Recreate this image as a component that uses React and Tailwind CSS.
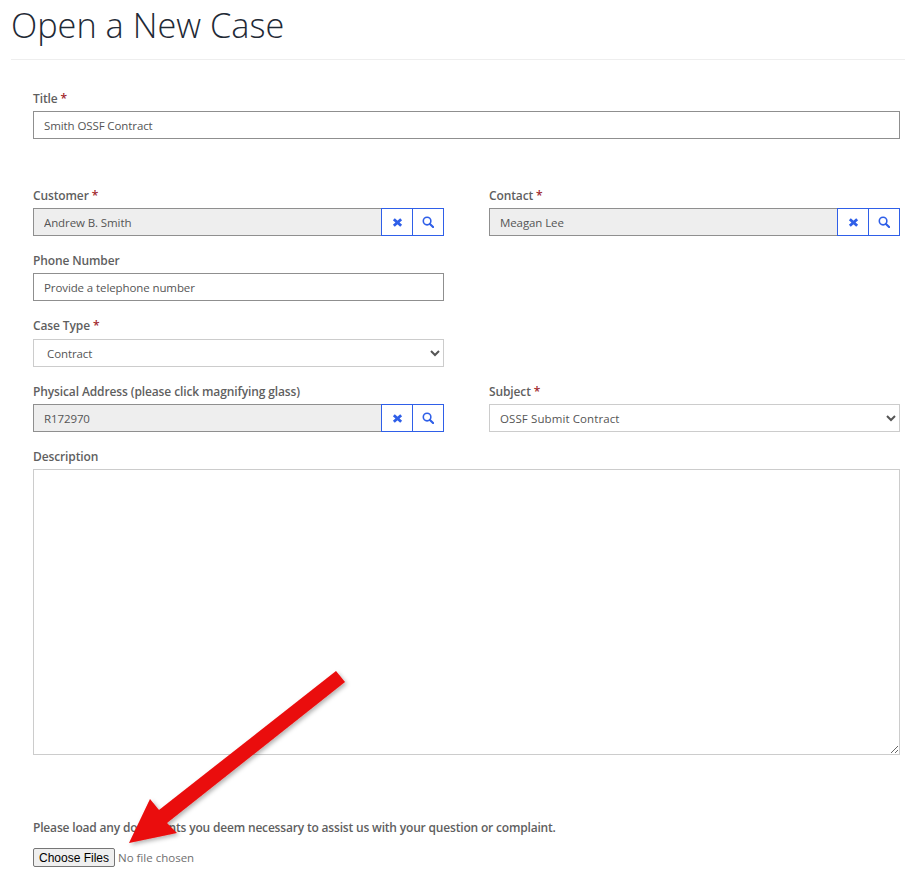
import React from 'react';

/* ── Icons (heavy x + magnifier, as in the lookup buttons) ── */
const ClearIcon = () => (
  <svg className="h-[11px] w-[11px]" viewBox="0 0 12 12" fill="none" stroke="currentColor" strokeWidth="3.1">
    <path d="M2 2.4 10 9.6M10 2.4 2 9.6" />
  </svg>
);

const SearchIcon = () => (
  <svg className="h-[12px] w-[12px]" viewBox="0 0 13 13" fill="none" stroke="currentColor">
    <circle cx="5.5" cy="5.5" r="4.1" strokeWidth="1.7" />
    <path d="M8.6 8.6 12 12" strokeWidth="2.3" strokeLinecap="round" />
  </svg>
);

/* ── Field label ─────────────────────────────────────── */
const Label = ({ text, required }) => (
  <label className="block h-[19px] text-[12px] leading-[14px] tracking-[-0.12px] font-semibold text-[#5f5f5f]">
    {text}
    {required && <span className="text-[#a1262c]"> *</span>}
  </label>
);

/* ── Read-only lookup with clear + search buttons ────── */
const Lookup = ({ label, required, value }) => (
  <div>
    <Label text={label} required={required} />
    <div className="flex h-[28px]">
      <input
        readOnly
        value={value}
        className="min-w-0 flex-1 border border-r-0 border-[#8f8f8f] bg-[#eeeeee] px-[10px] pt-[2px] text-[11.5px] tracking-[-0.1px] text-[#555555] outline-none"
      />
      <button className="flex w-[32px] items-center justify-center border border-[#2f5fe8] bg-white text-[#2f5fe8]">
        <ClearIcon />
      </button>
      <button className="-ml-px flex w-[32px] items-center justify-center border border-[#2f5fe8] bg-white text-[#2f5fe8]">
        <SearchIcon />
      </button>
    </div>
  </div>
);

const TextField = ({ label, required, value }) => (
  <div>
    <Label text={label} required={required} />
    <input
      readOnly
      value={value}
      className="block h-[28px] w-full border border-[#8f8f8f] bg-white px-[10px] text-[11.5px] tracking-[-0.1px] text-[#555555] outline-none"
    />
  </div>
);

const SelectField = ({ label, required, value, className }) => (
  <div>
    <Label text={label} required={required} />
    <select
      defaultValue={value}
      className={`block h-[28px] w-full border border-[#cccccc] bg-white text-[11.5px] text-[#555555] outline-none ${className}`}
    >
      <option>{value}</option>
    </select>
  </div>
);

export default function App() {
  return (
    <div
      className="relative h-[874px] w-[916px] overflow-hidden bg-white text-[#555555]"
      style={{ fontFamily: '"Open Sans", "Noto Sans", sans-serif' }}
    >
      <div className="mx-[11px] h-[60px] border-b border-[#eeeeee]">
        <h1 className="text-[34.3px] leading-[49px] font-light text-[#1f2a36]">Open a New Case</h1>
      </div>

      <form className="mt-[32px] ml-[33px] flex w-[867px] flex-col">
        <TextField label="Title" required value="Smith OSSF Contract" />

        <div className="mt-[50px] grid grid-cols-2 gap-x-[45px]">
          <Lookup label="Customer" required value="Andrew B. Smith" />
          <Lookup label="Contact" required value="Meagan Lee" />
        </div>

        <div className="mt-[18px] grid grid-cols-2 gap-x-[45px]">
          <TextField label="Phone Number" value="Provide a telephone number" />
        </div>

        <div className="mt-[18px] grid grid-cols-2 gap-x-[45px]">
          <SelectField label="Case Type" required value="Contract" className="mt-px px-[9px] tracking-[-0.1px]" />
        </div>

        <div className="mt-[18px] grid grid-cols-2 gap-x-[45px]">
          <Lookup label="Physical Address (please click magnifying glass)" value="R172970" />
          <SelectField label="Subject" required value="OSSF Submit Contract" className="px-[6px] tracking-[0.1px]" />
        </div>

        <div className="mt-[18px]">
          <Label text="Description" />
          <textarea className="block h-[286px] w-full border border-[#cccccc] bg-white outline-none" />
        </div>

        <p className="mt-[63px] h-[19px] text-[12px] leading-[19px] tracking-[-0.18px] font-semibold text-[#5f5f5f]">
          Please load any documents you deem necessary to assist us with your question or complaint.
        </p>

        <input
          type="file"
          multiple
          className="mt-[11px] block text-[11.5px] text-[#6f6f6f] file:mr-[3px] file:h-[19px] file:w-[82px] file:rounded-[2px] file:border file:border-[#767676] file:bg-[#efefef] file:font-['Liberation_Sans'] file:text-[12px] file:text-black"
        />
      </form>

      {/* Annotation arrow over the form */}
      <svg className="absolute top-0 left-0 h-[874px] w-[916px]" viewBox="0 0 916 874">
        <defs>
          <filter id="arrowShadow" x="-20%" y="-20%" width="140%" height="140%">
            <feDropShadow dx="2" dy="2" stdDeviation="2" floodColor="#000000" floodOpacity="0.3" />
          </filter>
        </defs>
        <polygon
          points="336,671 345,682 167,823 177,833 129,843 150,799 159,810"
          fill="#ea0a0a"
          filter="url(#arrowShadow)"
        />
      </svg>
    </div>
  );
}
